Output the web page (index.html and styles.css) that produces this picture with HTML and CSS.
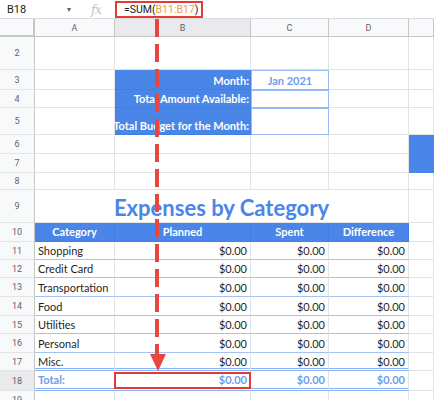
FILE: index.html
```html
<!DOCTYPE html>
<html>
<head>
<meta charset="utf-8">
<link rel="stylesheet" href="styles.css">
</head>
<body>
<div class="page">
  <div class="fbar">
    <div class="namebox"><span class="cellref">B18</span><span class="caret">▾</span></div>
    <div class="fxbox"><span class="fx">fx</span></div>
    <div class="formula">=SUM(<span class="ref">B11:B17</span>)</div>
  </div>
  <div class="sheet">
    <div class="row colhead">
      <div class="corner"></div><div class="ch">A</div><div class="ch ch-sel">B</div><div class="ch">C</div><div class="ch">D</div><div class="ch"></div>
    </div>
    <div class="row h33">
      <div class="rh">2</div><div class="c"></div><div class="c"></div><div class="c"></div><div class="c"></div><div class="c"></div>
    </div>
    <div class="row h20">
      <div class="rh">3</div><div class="c"></div><div class="c lbl">Month:</div><div class="c inp val">Jan 2021</div><div class="c"></div><div class="c"></div>
    </div>
    <div class="row h18">
      <div class="rh">4</div><div class="c"></div><div class="c lbl">Total Amount Available:</div><div class="c inp"></div><div class="c"></div><div class="c"></div>
    </div>
    <div class="row h27">
      <div class="rh">5</div><div class="c"></div><div class="c lbl">Total Budget for the Month:</div><div class="c inp"></div><div class="c"></div><div class="c"></div>
    </div>
    <div class="row h19">
      <div class="rh">6</div><div class="c"></div><div class="c"></div><div class="c"></div><div class="c"></div><div class="c fill"></div>
    </div>
    <div class="row h19">
      <div class="rh">7</div><div class="c"></div><div class="c"></div><div class="c"></div><div class="c"></div><div class="c fill"></div>
    </div>
    <div class="row h17">
      <div class="rh">8</div><div class="c"></div><div class="c"></div><div class="c"></div><div class="c"></div><div class="c"></div>
    </div>
    <div class="row h33">
      <div class="rh">9</div><div class="c title">Expenses by Category</div><div class="c"></div>
    </div>
    <div class="row h19">
      <div class="rh">10</div><div class="c th">Category</div><div class="c th">Planned</div><div class="c th">Spent</div><div class="c th">Difference</div><div class="c"></div>
    </div>
    <div class="row h18">
      <div class="rh">11</div><div class="c td">Shopping</div><div class="c td num">$0.00</div><div class="c td num">$0.00</div><div class="c td num">$0.00</div><div class="c"></div>
    </div>
    <div class="row h18">
      <div class="rh">12</div><div class="c td">Credit Card</div><div class="c td num">$0.00</div><div class="c td num">$0.00</div><div class="c td num">$0.00</div><div class="c"></div>
    </div>
    <div class="row h19">
      <div class="rh">13</div><div class="c td">Transportation</div><div class="c td num">$0.00</div><div class="c td num">$0.00</div><div class="c td num">$0.00</div><div class="c"></div>
    </div>
    <div class="row h19">
      <div class="rh">14</div><div class="c td">Food</div><div class="c td num">$0.00</div><div class="c td num">$0.00</div><div class="c td num">$0.00</div><div class="c"></div>
    </div>
    <div class="row h18">
      <div class="rh">15</div><div class="c td">Utilities</div><div class="c td num">$0.00</div><div class="c td num">$0.00</div><div class="c td num">$0.00</div><div class="c"></div>
    </div>
    <div class="row h19">
      <div class="rh">16</div><div class="c td">Personal</div><div class="c td num">$0.00</div><div class="c td num">$0.00</div><div class="c td num">$0.00</div><div class="c"></div>
    </div>
    <div class="row h18">
      <div class="rh">17</div><div class="c td last">Misc.</div><div class="c td last num">$0.00</div><div class="c td last num">$0.00</div><div class="c td last num">$0.00</div><div class="c"></div>
    </div>
    <div class="row h20">
      <div class="rh rh-sel">18</div><div class="c tot">Total:</div><div class="c tot num picked">$0.00</div><div class="c tot num">$0.00</div><div class="c tot num">$0.00</div><div class="c"></div>
    </div>
    <div class="row h19">
      <div class="rh">19</div><div class="c"></div><div class="c"></div><div class="c"></div><div class="c"></div><div class="c"></div>
    </div>
  </div>
  <svg class="arrow" width="434" height="400" viewBox="0 0 434 400">
    <line x1="157" y1="19" x2="157" y2="354" stroke="#e8463f" stroke-width="4" stroke-dasharray="18 7"/>
    <polygon points="150,354 166,354 158,371" fill="#e8463f"/>
  </svg>
</div>
</body>
</html>
```

FILE: styles.css
```css
* { box-sizing: border-box; }
html, body { margin: 0; padding: 0; background: #fff; }
body { width: 434px; height: 400px; overflow: hidden; font-family: Lato, "Open Sans", sans-serif; }
.page { position: relative; width: 434px; height: 400px; overflow: hidden; }

.fbar {
  display: flex;
  height: 19px;
  border-bottom: 1px solid #dadce0;
  font-family: Roboto, "Liberation Sans", sans-serif;
  align-items: stretch;
}
.namebox {
  width: 86px;
  display: flex;
  align-items: center;
  padding-left: 7px;
  font-size: 11px;
  color: #202124;
}
.cellref { width: 60px; }
.caret { font-size: 8px; color: #5f6368; }
.fxbox {
  width: 29px;
  display: flex;
  align-items: center;
  padding-left: 5px;
}
.fx {
  font-family: "DejaVu Serif", "Liberation Serif", serif;
  font-style: italic;
  font-size: 13px;
  color: #c4c7c5;
  letter-spacing: -1px;
}
.formula {
  width: 88px;
  margin: 1px 0 0 0;
  height: 17px;
  border: 2px solid #e53935;
  display: flex;
  align-items: center;
  padding-left: 7px;
  font-size: 10.5px;
  color: #202124;
  white-space: nowrap;
}
.ref { color: #f0a04b; }

.sheet { display: flex; flex-direction: column; }
.row {
  display: grid;
  grid-template-columns: 35px 80px 136px 78px 80px 25px;
}
.h17 { height: 17px; }
.h18 { height: 18px; }
.h19 { height: 19px; }
.h20 { height: 20px; }
.h27 { height: 27px; }
.h33 { height: 33px; }

.colhead { height: 18px; background: #f8f9fa; }
.corner {
  border-right: 2px solid #c4c7c5;
  border-bottom: 2px solid #c4c7c5;
  background: #f8f9fa;
}
.ch {
  border-right: 1px solid #c4c7c5;
  border-bottom: 1px solid #c4c7c5;
  font-family: Roboto, "Liberation Sans", sans-serif;
  font-size: 9px;
  color: #5f6368;
  display: flex;
  align-items: center;
  justify-content: center;
}
.ch-sel { background: #e8eaed; }

.rh {
  background: #f8f9fa;
  border-right: 1px solid #c4c7c5;
  border-bottom: 1px solid #e2e3e3;
  font-family: Roboto, "Liberation Sans", sans-serif;
  font-size: 9px;
  color: #5f6368;
  display: flex;
  align-items: center;
  justify-content: center;
}
.rh-sel { background: #e8eaed; }

.c {
  border-right: 1px solid #e2e3e3;
  border-bottom: 1px solid #e2e3e3;
  font-size: 11px;
  line-height: 1;
  color: #1f1f1f;
  display: flex;
  align-items: flex-end;
  padding: 0 3px 3px 3px;
  white-space: nowrap;
}

.lbl {
  background: #4a86e8;
  border-right: none;
  border-bottom: 1px solid #3f7ee3;
  color: #fff;
  font-weight: 700;
  justify-content: flex-end;
  padding-right: 2px;
}
.inp {
  border: 1px solid #97baf5;
  justify-content: center;
  align-items: center;
  padding: 0;
}
.val { color: #6d9eeb; font-weight: 700; }
.fill { background: #4a86e8; border-color: #4a86e8; }

.title {
  grid-column: 2 / 6;
  justify-content: center;
  font-size: 22px;
  font-weight: 700;
  color: #4a86e8;
  padding-bottom: 3px;
}

.th {
  background: #4a86e8;
  border-right: 1px solid #3f7ee3;
  border-bottom: 1px solid #3f7ee3;
  color: #fff;
  font-weight: 700;
  justify-content: center;
  padding-bottom: 4px;
}
.td { border-bottom: 1px solid #a4c2f4; }
.td.last { border-bottom: 3px double #8ab4f8; padding-bottom: 1px; }
.num { justify-content: flex-end; }

.tot {
  color: #6d9eeb;
  font-weight: 700;
  border-bottom: 3px double #8ab4f8;
  padding-bottom: 3px;
}
.picked { position: relative; }
.picked::after {
  content: "";
  position: absolute;
  left: -1px;
  right: -1px;
  top: 1px;
  bottom: -1px;
  border: 2px solid #e53935;
}

.arrow { position: absolute; left: 0; top: 0; pointer-events: none; }
```
